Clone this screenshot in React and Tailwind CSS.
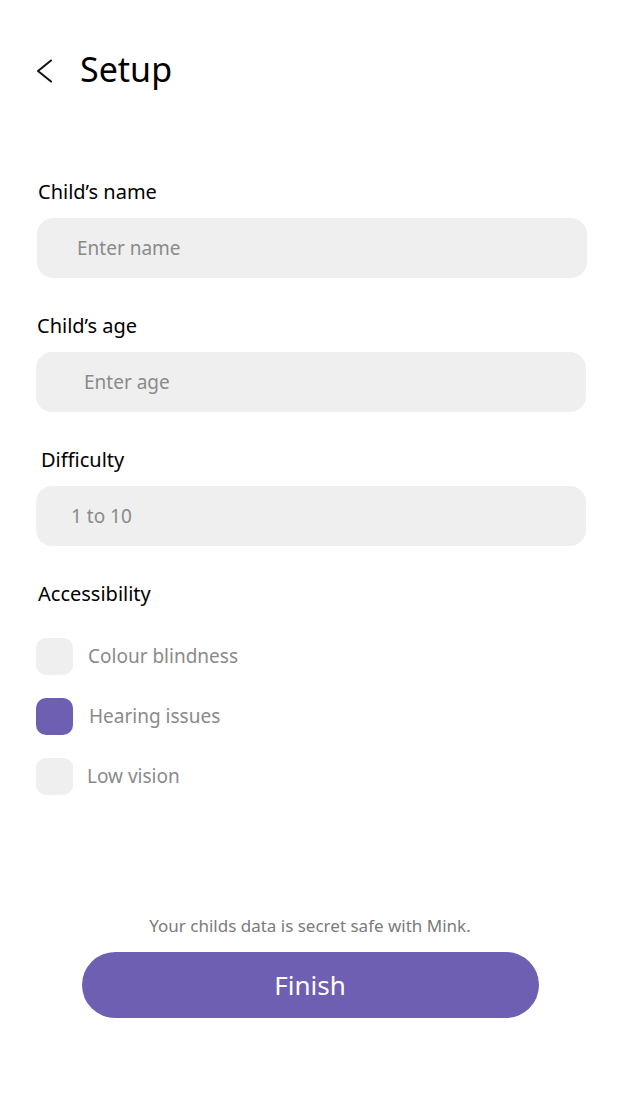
import { useState } from 'react';

const font = { fontFamily: '"Noto Sans", "Open Sans", sans-serif' };

function Field({ label, placeholder, labelClass, inputClass }) {
  return (
    <div className="flex flex-col">
      <label className={`text-[20px] leading-[28px] text-black ${labelClass}`}>{label}</label>
      <input
        placeholder={placeholder}
        className={`mt-[12px] h-[60px] rounded-[16px] bg-[#efefef] text-[19px] text-black placeholder:text-[#8a8a8a] outline-none ${inputClass}`}
      />
    </div>
  );
}

function Option({ label, checked, onToggle, textClass }) {
  return (
    <button onClick={onToggle} className="flex items-center h-[37px] text-left">
      <span
        className={`w-[37px] h-[37px] rounded-[10px] shrink-0 ${checked ? 'bg-[#6e5fb3]' : 'bg-[#efefef]'}`}
      />
      <span className={`text-[19px] text-[#8a8a8a] ${textClass}`}>{label}</span>
    </button>
  );
}

export default function App() {
  const [access, setAccess] = useState({ colour: false, hearing: true, vision: false });
  const toggle = (k) => setAccess((a) => ({ ...a, [k]: !a[k] }));

  return (
    <div style={font} className="w-[622px] h-[1105px] bg-white flex flex-col">
      <header className="flex items-center pt-[42px] pl-[36px] h-[96px]">
        <svg width="17" height="24" viewBox="0 0 17 24" fill="none" className="mt-[4px]">
          <path d="M15 1.5 L2 12 L15 22.5" stroke="#111" strokeWidth="2" strokeLinecap="round" strokeLinejoin="round" />
        </svg>
        <h1 className="ml-[27px] text-[34px] leading-[48px] text-black">Setup</h1>
      </header>

      <div className="flex flex-col mt-[82px] pr-[36px]">
        <Field label="Child’s name" placeholder="Enter name" labelClass="ml-[38px]" inputClass="ml-[37px] mr-[-1px] pl-[40px]" />
        <div className="mt-[34px]">
          <Field label="Child’s age" placeholder="Enter age" labelClass="ml-[37px]" inputClass="ml-[36px] pl-[48px]" />
        </div>
        <div className="mt-[34px]">
          <Field label="Difficulty" placeholder="1 to 10" labelClass="ml-[41px]" inputClass="ml-[36px] pl-[35px]" />
        </div>
      </div>

      <div className="flex flex-col mt-[34px] pl-[36px]">
        <p className="ml-[2px] text-[20px] leading-[28px] text-black">Accessibility</p>
        <div className="flex flex-col gap-[23px] mt-[30px]">
          <Option label="Colour blindness" checked={access.colour} onToggle={() => toggle('colour')} textClass="ml-[15px]" />
          <Option label="Hearing issues" checked={access.hearing} onToggle={() => toggle('hearing')} textClass="ml-[16px]" />
          <Option label="Low vision" checked={access.vision} onToggle={() => toggle('vision')} textClass="ml-[14px]" />
        </div>
      </div>

      <div className="flex flex-col items-center mt-auto mb-[87px]">
        <p className="text-[17px] text-[#7b7b7b] ml-[-2px]">Your childs data is secret safe with Mink.</p>
        <button className="mt-[14px] w-[457px] h-[66px] rounded-full bg-[#6e5fb3] text-white text-[26px] ml-[-2px]">
          Finish
        </button>
      </div>
    </div>
  );
}
